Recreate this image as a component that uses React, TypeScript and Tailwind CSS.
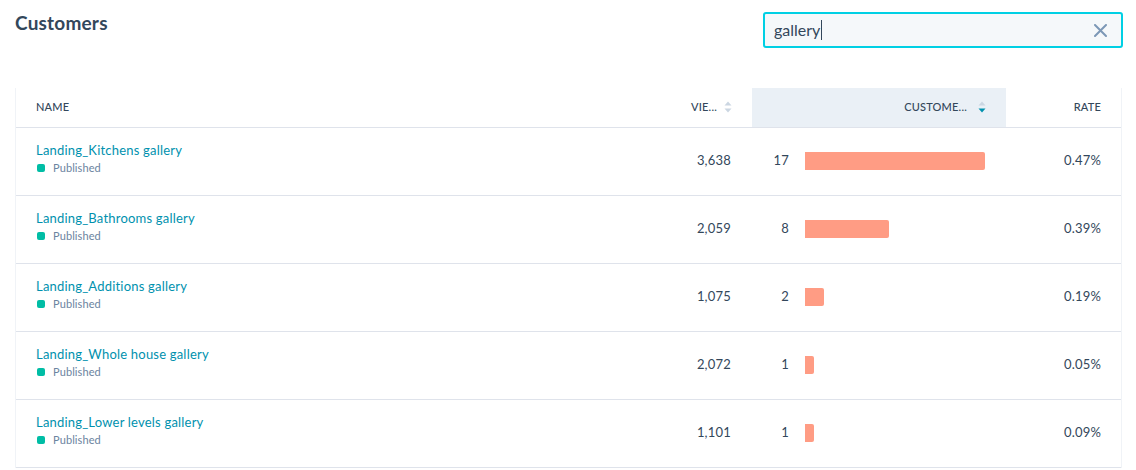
import React from 'react'

const rows = [
  { name: 'Landing_Kitchens gallery', views: '3,638', customers: 17, bar: 180, rate: '0.47%' },
  { name: 'Landing_Bathrooms gallery', views: '2,059', customers: 8, bar: 84, rate: '0.39%' },
  { name: 'Landing_Additions gallery', views: '1,075', customers: 2, bar: 19, rate: '0.19%' },
  { name: 'Landing_Whole house gallery', views: '2,072', customers: 1, bar: 9, rate: '0.05%' },
  { name: 'Landing_Lower levels gallery', views: '1,101', customers: 1, bar: 9, rate: '0.09%' },
]

function SortIcon({ active, gap }: { active?: boolean; gap: string }) {
  return (
    <svg width="8" height="12" viewBox="0 0 8 12" className={`${gap} shrink-0`}>
      <path d="M4 0.5 L7.5 4.5 H0.5 Z" fill="#cbd6e2" />
      <path d="M4 11.5 L7.5 7.5 H0.5 Z" fill={active ? '#0091ae' : '#cbd6e2'} />
    </svg>
  )
}

export default function App() {
  return (
    <div
      className="h-[470px] w-[1136px] overflow-hidden bg-white text-[#33475b]"
      style={{ fontFamily: 'Lato, "Open Sans", sans-serif' }}
    >
      <div className="flex items-start justify-between pl-[15px] pr-[13px] pt-[12px]">
        <h1 className="pt-[1px] text-[19px] font-bold leading-[20px] tracking-[0.2px] text-[#33475b]">Customers</h1>
        <div className="flex h-[36px] w-[360px] items-center justify-between rounded-[3px] border-2 border-[#00d0e4] bg-[#f5f8fa] pl-[9px] pr-[14px]">
          <span className="flex items-center text-[16px] text-[#33475b]">
            gallery
            <span className="ml-[1px] inline-block h-[20px] w-px bg-[#33475b]" />
          </span>
          <svg width="13" height="13" viewBox="0 0 13 13">
            <path d="M1 1 L12 12 M12 1 L1 12" stroke="#7c98b6" strokeWidth="2" strokeLinecap="round" />
          </svg>
        </div>
      </div>

      <div className="ml-[15px] mr-[14px] mt-[40px] border-x border-[#f0f3f7]">
        <table className="w-full table-fixed border-collapse">
          <colgroup>
            <col />
            <col className="w-[101px]" />
            <col className="w-[254px]" />
            <col className="w-[115px]" />
          </colgroup>
          <thead>
            <tr className="h-[39px] border-b border-[#dfe3eb] text-[11px] uppercase tracking-[0.2px]">
              <th className="pl-[20px] text-left font-medium">Name</th>
              <th className="pr-[20px] font-medium">
                <div className="flex items-center justify-end">
                  <span>Vie...</span>
                  <SortIcon gap="ml-[7px]" />
                </div>
              </th>
              <th className="bg-[#eaf0f6] pr-[20px] font-medium">
                <div className="flex items-center justify-end">
                  <span>Custome...</span>
                  <SortIcon active gap="ml-[11px]" />
                </div>
              </th>
              <th className="pr-[20px] text-right font-medium">Rate</th>
            </tr>
          </thead>
          <tbody>
            {rows.map((r) => (
              <tr key={r.name} className="h-[68px] border-b border-[#dfe3eb] text-[13px] tracking-[0.2px]">
                <td className="pl-[20px] align-top pt-[13px]">
                  <div className="leading-[18px] text-[#0091ae]">{r.name}</div>
                  <div className="mt-[1px] flex items-center text-[11px] tracking-[0.1px] text-[#6b84a0]">
                    <span className="mr-[8px] ml-[1px] inline-block h-[8px] w-[8px] rounded-[2px] bg-[#00bda5]" />
                    Published
                  </div>
                </td>
                <td className="pr-[21px] text-right">{r.views}</td>
                <td className="pr-[21px]">
                  <div className="flex items-center">
                    <span className="w-[37px] text-right">{r.customers}</span>
                    <div className="ml-[16px] flex-1">
                      <div className="h-[18px] rounded-r-[2px] bg-[#ff9c84]" style={{ width: `${r.bar}px` }} />
                    </div>
                  </div>
                </td>
                <td className="pr-[20px] text-right">{r.rate}</td>
              </tr>
            ))}
          </tbody>
        </table>
      </div>
    </div>
  )
}
